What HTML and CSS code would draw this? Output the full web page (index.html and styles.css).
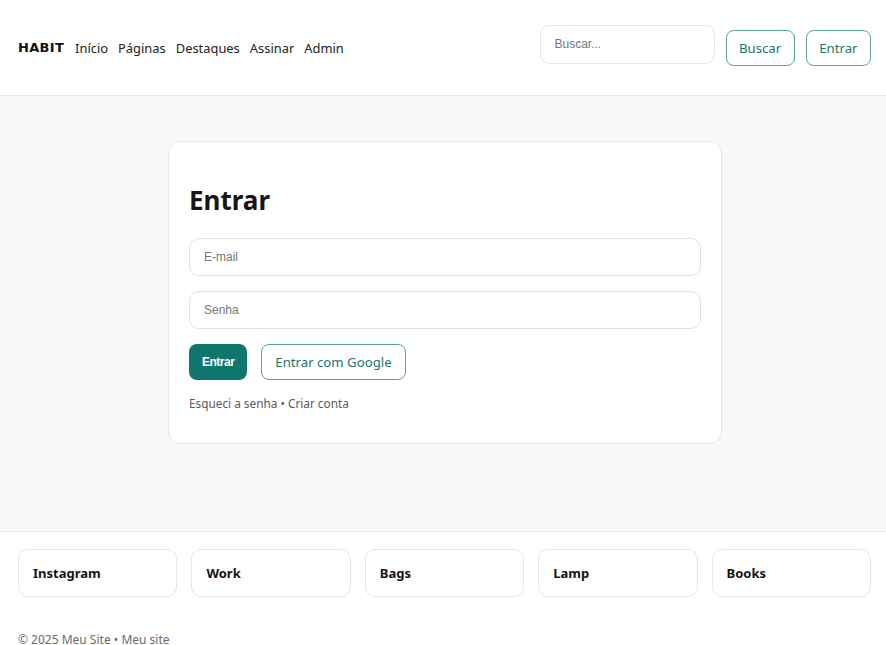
FILE: index.html
```html
<!DOCTYPE html>
<html lang="pt-BR">
<head>
<meta charset="utf-8">
<title>HABIT</title>
<link rel="stylesheet" href="styles.css">
</head>
<body>
<header class="topbar">
  <nav class="nav">
    <a class="brand" href="#">HABIT</a>
    <a class="nav-link" href="#">Início</a>
    <a class="nav-link" href="#">Páginas</a>
    <a class="nav-link" href="#">Destaques</a>
    <a class="nav-link" href="#">Assinar</a>
    <a class="nav-link" href="#">Admin</a>
  </nav>
  <div class="actions">
    <input class="search" type="text" placeholder="Buscar...">
    <button class="btn-outline">Buscar</button>
    <button class="btn-outline">Entrar</button>
  </div>
</header>
<main class="main">
  <section class="card">
    <h1 class="title">Entrar</h1>
    <input class="field" type="email" placeholder="E-mail">
    <input class="field" type="password" placeholder="Senha">
    <div class="row">
      <button class="btn-primary">Entrar</button>
      <button class="btn-outline btn-google">Entrar com Google</button>
    </div>
    <p class="links">Esqueci a senha • Criar conta</p>
  </section>
</main>
<footer class="footer">
  <div class="tiles">
    <div class="tile">Instagram</div>
    <div class="tile">Work</div>
    <div class="tile">Bags</div>
    <div class="tile">Lamp</div>
    <div class="tile">Books</div>
  </div>
  <p class="copy">© 2025 Meu Site • Meu site</p>
</footer>
</body>
</html>
```

FILE: styles.css
```css
* { box-sizing: border-box; }
html, body { margin: 0; padding: 0; }
body {
  font-family: "Noto Sans", "Open Sans", sans-serif;
  color: #1c1c1c;
  background: #ffffff;
  font-size: 13px;
}
a { text-decoration: none; color: inherit; }

.topbar {
  height: 96px;
  display: flex;
  align-items: center;
  justify-content: space-between;
  padding: 0 15px 0 18px;
  border-bottom: 1px solid #e6e6e6;
  background: #fff;
}
.nav { display: flex; align-items: center; gap: 10px; }
.brand {
  font-family: "DejaVu Sans", sans-serif;
  font-weight: 700;
  font-size: 13px;
  letter-spacing: 0.3px;
  color: #111;
  margin-right: 1px;
}
.nav-link { font-size: 12.9px; color: #222; }

.actions { display: flex; align-items: center; gap: 11px; }
.search {
  width: 175px;
  height: 39px;
  border: 1px solid #e6e6e6;
  border-radius: 9px;
  padding: 0 14px;
  font-family: "Liberation Sans", Arial, sans-serif;
  font-size: 12px;
  margin-bottom: 7px;
  background: #fff;
}
.search::placeholder, .field::placeholder { color: #777; }
.btn-outline {
  height: 36px;
  padding: 0 12.5px;
  border: 1px solid #5aa39b;
  border-radius: 8px;
  background: #fff;
  color: #1a766d;
  font-family: "Noto Sans", "Open Sans", sans-serif;
  font-size: 13.2px;
}

.main {
  background: #f8f8f8;
  height: 435px;
  padding-top: 45px;
  padding-left: 4px;
  display: flex;
  justify-content: center;
  align-items: flex-start;
}
.card {
  width: 554px;
  background: #fff;
  border: 1px solid #e6e6e6;
  border-radius: 12px;
  padding: 40px 20px 31px 20px;
  display: flex;
  flex-direction: column;
}
.title {
  margin: 0 0 20px 0;
  font-size: 26px;
  font-weight: 700;
  line-height: 36px;
  color: #161616;
}
.field {
  height: 38px;
  border: 1px solid #e3e3e3;
  border-radius: 10px;
  padding: 0 14px;
  font-family: "Liberation Sans", Arial, sans-serif;
  font-size: 12px;
  margin-bottom: 15px;
  background: #fff;
}
.row { display: flex; gap: 14px; margin-top: 0; }
.btn-primary {
  height: 36px;
  padding: 0 13px;
  border: none;
  border-radius: 8px;
  background: #0f766e;
  color: #fff;
  font-family: "Liberation Sans", Arial, sans-serif;
  font-weight: 700;
  font-size: 12px;
  letter-spacing: -0.5px;
}
.btn-google { padding: 0 13px; }
.links {
  margin: 14px 0 0 0;
  font-size: 11.8px;
  color: #5b5b5b;
  line-height: 18px;
}

.footer {
  border-top: 1px solid #e6e6e6;
  padding: 17px 15px 0 18px;
  background: #fff;
}
.tiles {
  display: grid;
  grid-template-columns: repeat(5, 1fr);
  gap: 14px;
}
.tile {
  height: 48px;
  border: 1px solid #e6e6e6;
  border-radius: 10px;
  display: flex;
  align-items: center;
  padding: 0 14px;
  font-weight: 700;
  font-size: 13px;
  color: #141414;
}
.copy {
  margin: 34px 0 0 0;
  font-size: 12px;
  color: #6b6b6b;
}
```
